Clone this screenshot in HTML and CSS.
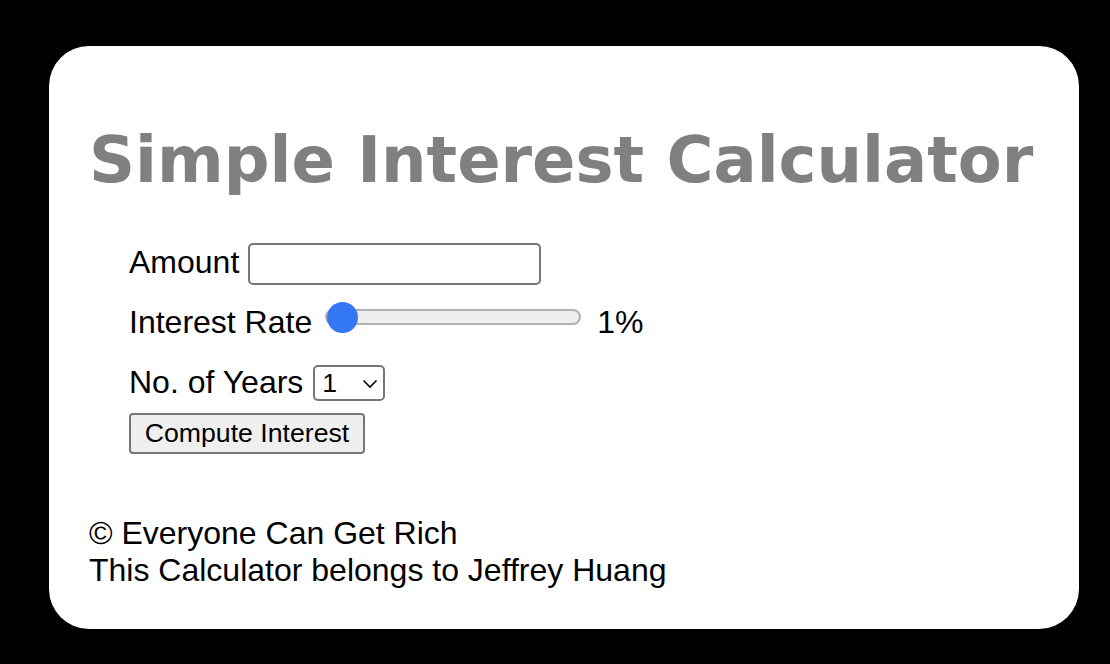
FILE: index.html
```html
<!DOCTYPE html>
<html lang="en">
<head>
<meta charset="utf-8">
<title>Simple Interest Calculator</title>
<link rel="stylesheet" href="styles.css">
</head>
<body>
<main class="card">
  <h1 class="title">Simple Interest Calculator</h1>
  <form class="form">
    <div class="row row-amount">
      <label class="label" for="amount">Amount</label>
      <input class="text-input" id="amount" type="number">
    </div>
    <div class="row row-rate">
      <label class="label label-rate" for="rate">Interest Rate</label>
      <input class="slider" id="rate" type="range" min="1" max="20" value="1" step="0.25">
      <span class="rate-value">1%</span>
    </div>
    <div class="row row-years">
      <label class="label label-years" for="years">No. of Years</label>
      <span class="select-wrap">
        <select class="select" id="years">
          <option>1</option><option>2</option><option>3</option><option>4</option><option>5</option>
        </select>
        <svg class="chevron" width="16" height="10" viewBox="0 0 16 10"><path d="M1.5 1.5 L8 8 L14.5 1.5" fill="none" stroke="#000" stroke-width="1.6"/></svg>
      </span>
    </div>
    <button class="button" type="button">Compute Interest</button>
  </form>
  <footer class="footer">
    <div>&copy; Everyone Can Get Rich</div>
    <div>This Calculator belongs to Jeffrey Huang</div>
  </footer>
</main>
</body>
</html>
```

FILE: styles.css
```css
html, body {
  margin: 0;
  padding: 0;
  background: #000;
}
body {
  padding: 46px 31px 35px 49px;
  font-family: "Liberation Sans", Arial, sans-serif;
  color: #000;
}
.card {
  box-sizing: border-box;
  width: 1030px;
  height: 583px;
  background: #fff;
  border-radius: 40px;
  padding: 76px 41px 0 40px;
}
.title {
  margin: 0;
  font-family: "DejaVu Sans", Verdana, sans-serif;
  font-weight: bold;
  font-size: 64px;
  line-height: 77px;
  color: #808080;
  white-space: nowrap;
}
.form {
  margin: 42px 0 0 40px;
  display: flex;
  flex-direction: column;
  align-items: flex-start;
}
.row {
  display: flex;
  align-items: flex-start;
}
.label {
  font-size: 32px;
  line-height: 37px;
}
.row-amount .label { margin: 3px 9px 0 0; }
.text-input {
  box-sizing: border-box;
  width: 293px;
  height: 42px;
  border: 2px solid #767676;
  border-radius: 5px;
  background: #fff;
  margin: 2px 0 0 0;
  font-size: 26px;
  padding: 2px 6px;
}
.row-rate { margin-top: 16px; }
.label-rate { margin: 2.5px 13px 0 0; }
.slider {
  -webkit-appearance: none;
  appearance: none;
  width: 256px;
  height: 32px;
  margin: 0;
  padding: 0;
  background: transparent;
}
.slider::-webkit-slider-runnable-track {
  height: 16px;
  box-sizing: border-box;
  background: #efefef;
  border: 2px solid #b1b1b1;
  border-radius: 8px;
}
.slider::-webkit-slider-thumb {
  -webkit-appearance: none;
  appearance: none;
  width: 31px;
  height: 31px;
  border-radius: 50%;
  background: #3478f6;
  border: none;
  margin-top: -9.5px;
}
.rate-value {
  font-size: 32px;
  line-height: 37px;
  margin: 2.5px 0 0 16px;
}
.row-years { margin-top: 22.5px; }
.label-years { margin: 0.5px 10px 0 0; }
.select-wrap {
  position: relative;
  display: inline-flex;
  margin-top: 2px;
}
.select {
  -webkit-appearance: none;
  appearance: none;
  box-sizing: border-box;
  width: 72px;
  height: 36px;
  border: 2px solid #767676;
  border-radius: 5px;
  background: #fff;
  font-family: "Liberation Sans", Arial, sans-serif;
  font-size: 26.67px;
  color: #000;
  padding: 0 0 0 7px;
  margin: 0;
}
.chevron {
  position: absolute;
  right: 7px;
  top: 14px;
  pointer-events: none;
}
.button {
  margin-top: 12px;
  box-sizing: border-box;
  width: 236px;
  height: 41px;
  background: #efefef;
  border: 2px solid #767676;
  border-radius: 4px;
  font-family: "Liberation Sans", Arial, sans-serif;
  font-size: 26.67px;
  color: #000;
  padding: 0;
}
.footer {
  margin-top: 60.5px;
  font-size: 32px;
  line-height: 37px;
}
```
